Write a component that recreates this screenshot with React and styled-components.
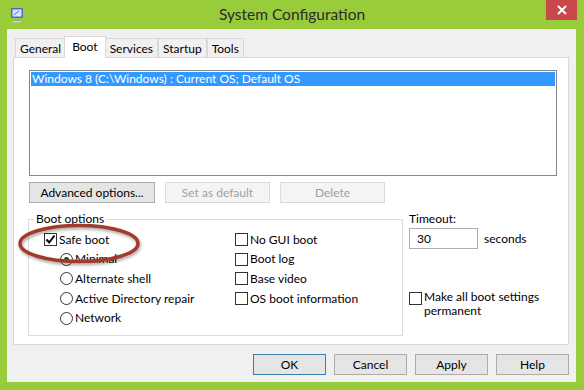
import React from "react";
import styled, { createGlobalStyle } from "styled-components";

const Global = createGlobalStyle`
  html, body { margin: 0; padding: 0; }
  body { font-family: "Lato", "Noto Sans", sans-serif; font-size: 12px; color: #000; }
`;

const Window = styled.div`
  position: relative;
  width: 584px;
  height: 390px;
  background: #99cc3a;
  display: flex;
  flex-direction: column;
  overflow: hidden;
`;

const TitleBar = styled.div`
  height: 29px;
  display: flex;
  align-items: center;
`;

const AppIcon = styled.svg`
  margin-left: 9px;
  width: 16px;
  height: 16px;
`;

const Title = styled.div`
  flex: 1;
  text-align: center;
  font-size: 15.5px;
  color: #2b2b2b;
  margin-top: -1px;
  padding-left: 13px;
`;

const CloseBtn = styled.div`
  width: 31px;
  height: 20px;
  background: #c7474a;
  align-self: flex-start;
  margin-right: 7px;
  display: flex;
  align-items: center;
  justify-content: center;
`;

const Client = styled.div`
  flex: 1;
  margin: 0 8px 8px 7px;
  background: #f0f0f0;
  padding: 6px 7px 0 6px;
  display: flex;
  flex-direction: column;
`;

const TabRow = styled.div`
  display: flex;
  align-items: flex-end;
  height: 22px;
  padding-left: 2px;
  position: relative;
  z-index: 1;
`;

const Tab = styled.div`
  height: ${p => (p.$active ? "22px" : "19px")};
  margin-bottom: ${p => (p.$active ? "-1px" : "0")};
  padding: 0 ${p => (p.$active ? "7px" : "4px")};
  margin-left: ${p => (p.$active ? "-2px" : "0")};
  margin-right: ${p => (p.$active ? "-1px" : "0")};
  background: ${p => (p.$active ? "#fff" : "#f0f0f0")};
  border: 1px solid #d9d9d9;
  border-bottom: ${p => (p.$active ? "1px solid #fff" : "none")};
  display: flex;
  align-items: ${p => (p.$active ? "flex-start" : "center")};
  padding-top: ${p => (p.$active ? "2px" : "0")};
  box-sizing: border-box;
  & + & { border-left: ${p => (p.$active ? "1px solid #d9d9d9" : "none")}; }
`;

const Panel = styled.div`
  height: 288px;
  box-sizing: border-box;
  background: #fff;
  border: 1px solid #d9d9d9;
  padding: 12px 11px 0 15px;
  display: flex;
  flex-direction: column;
`;

const ListBox = styled.div`
  height: 106px;
  border: 1px solid #828790;
  box-sizing: border-box;
  padding: 1px;
`;

const ListItem = styled.div`
  height: 14px;
  line-height: 14px;
  background: ${p => (p.$selected ? "#3399ff" : "transparent")};
  color: ${p => (p.$selected ? "#fff" : "#000")};
  padding-left: 1px;
`;

const ButtonRow = styled.div`
  display: flex;
  gap: ${p => p.$gap || 9}px;
  margin-top: ${p => p.$mt || 0}px;
`;

const Button = styled.div`
  width: ${p => p.$w}px;
  height: 21px;
  box-sizing: border-box;
  border: 1px solid ${p => (p.$default ? "#3c7fb1" : p.$disabled ? "#dadada" : "#acacac")};
  background: ${p => (p.$disabled ? "#f4f4f4" : "#e5e5e5")};
  color: ${p => (p.$disabled ? "#a0a0a0" : "#000")};
  display: flex;
  align-items: center;
  justify-content: center;
  padding-bottom: 1px;
`;

const Lower = styled.div`
  display: flex;
  margin-top: 9px;
`;

const GroupBox = styled.fieldset`
  margin: 0 0 0 -1px;
  width: 375px;
  height: 124px;
  box-sizing: border-box;
  border: 1px solid #dcdcdc;
  padding: 0;
  display: flex;
`;

const Legend = styled.legend`
  padding: 0 2px;
  margin-left: 5px;
  line-height: 14px;
`;

const Col = styled.div`
  display: flex;
  flex-direction: column;
  padding-left: ${p => p.$pl}px;
  padding-top: 4px;
  width: ${p => (p.$w ? p.$w + "px" : "auto")};
`;

const Row = styled.div`
  display: flex;
  align-items: center;
  height: 19.6px;
  padding-left: ${p => p.$indent || 0}px;
`;

const Box = styled.div`
  width: 13px;
  height: 13px;
  box-sizing: border-box;
  border: 1px solid #333;
  background: #fff;
  margin-right: 2px;
  margin-top: ${p => p.$mt || 0}px;
  display: flex;
  align-items: center;
  justify-content: center;
  flex-shrink: 0;
`;

const Radio = styled.div`
  width: 13px;
  height: 13px;
  box-sizing: border-box;
  border: 1px solid #333;
  border-radius: 50%;
  background: #fff;
  margin-right: 2px;
  display: flex;
  align-items: center;
  justify-content: center;
  flex-shrink: 0;
  &::after {
    content: "";
    display: ${p => (p.$on ? "block" : "none")};
    width: 5px;
    height: 5px;
    border-radius: 50%;
    background: #333;
  }
`;

const Side = styled.div`
  display: flex;
  flex-direction: column;
  margin-left: 6px;
`;

const Label = styled.div`
  line-height: 14px;
`;

const TimeoutRow = styled.div`
  display: flex;
  align-items: center;
  margin-top: 2px;
`;

const Input = styled.div`
  width: 69px;
  height: 21px;
  box-sizing: border-box;
  border: 1px solid #abadb3;
  background: #fff;
  padding-left: 7px;
  display: flex;
  align-items: center;
  margin-right: 6px;
`;

const PermRow = styled.div`
  display: flex;
  align-items: flex-start;
  margin-top: 41px;
`;

const PermText = styled.div`
  line-height: 14px;
  margin-top: 0;
`;

const Footer = styled.div`
  display: flex;
  justify-content: flex-end;
  padding-top: 9px;
  gap: 8px;
`;

const Annotation = styled.svg`
  position: absolute;
  left: 18px;
  top: 222px;
  width: 126px;
  height: 44px;
  overflow: visible;
  pointer-events: none;
`;

const Check = () => (
  <svg width="11" height="11" viewBox="0 0 11 11">
    <path d="M1.5 5.5 L4.2 8.5 L9.5 1.5" fill="none" stroke="#000" strokeWidth="2" />
  </svg>
);

export default function App() {
  return (
    <>
      <Global />
      <Window>
        <TitleBar>
          <AppIcon viewBox="0 0 16 16">
            <rect x="2" y="1" width="12" height="10" rx="1" fill="#4a6cc9" />
            <rect x="3.5" y="2.5" width="9" height="7" fill="#d9e6ff" />
            <path d="M5 8 L10 4" stroke="#4a6cc9" strokeWidth="1" />
            <rect x="5" y="12" width="6" height="2" fill="#9aa" />
            <rect x="4" y="14" width="8" height="1.5" fill="#ccc" />
          </AppIcon>
          <Title>System Configuration</Title>
          <CloseBtn>
            <svg width="10" height="10" viewBox="0 0 10 10">
              <path d="M1 1 L9 9 M9 1 L1 9" stroke="#fff" strokeWidth="2" />
            </svg>
          </CloseBtn>
        </TitleBar>
        <Client>
          <TabRow>
            <Tab>General</Tab>
            <Tab $active>Boot</Tab>
            <Tab>Services</Tab>
            <Tab>Startup</Tab>
            <Tab>Tools</Tab>
          </TabRow>
          <Panel>
            <ListBox>
              <ListItem $selected>Windows 8 (C:\Windows) : Current OS; Default OS</ListItem>
            </ListBox>
            <ButtonRow $mt={6} $gap={10}>
              <Button $w={126}>Advanced options...</Button>
              <Button $w={105} $disabled>Set as default</Button>
              <Button $w={105} $disabled>Delete</Button>
            </ButtonRow>
            <Lower>
              <GroupBox>
                <Legend>Boot options</Legend>
                <Col $pl={15} $w={191}>
                  <Row>
                    <Box><Check /></Box>
                    <Label>Safe boot</Label>
                  </Row>
                  <Row $indent={16}><Radio $on /><Label>Minimal</Label></Row>
                  <Row $indent={16}><Radio /><Label>Alternate shell</Label></Row>
                  <Row $indent={16}><Radio /><Label>Active Directory repair</Label></Row>
                  <Row $indent={16}><Radio /><Label>Network</Label></Row>
                </Col>
                <Col $pl={0}>
                  <Row><Box /><Label>No GUI boot</Label></Row>
                  <Row><Box /><Label>Boot log</Label></Row>
                  <Row><Box /><Label>Base video</Label></Row>
                  <Row><Box /><Label>OS boot information</Label></Row>
                </Col>
              </GroupBox>
              <Side>
                <Label>Timeout:</Label>
                <TimeoutRow>
                  <Input>30</Input>
                  <Label>seconds</Label>
                </TimeoutRow>
                <PermRow>
                  <Box $mt={2} />
                  <PermText>Make all boot settings<br />permanent</PermText>
                </PermRow>
              </Side>
            </Lower>
          </Panel>
          <Footer>
            <Button $w={73} $default>OK</Button>
            <Button $w={73}>Cancel</Button>
            <Button $w={73}>Apply</Button>
            <Button $w={73}>Help</Button>
          </Footer>
        </Client>
        <Annotation viewBox="0 0 126 44">
          <defs>
            <filter id="sh" x="-20%" y="-30%" width="140%" height="170%">
              <feDropShadow dx="1" dy="2" stdDeviation="1.5" floodColor="#000" floodOpacity="0.35" />
            </filter>
          </defs>
          <ellipse cx="61" cy="21.5" rx="59" ry="18" fill="none" stroke="#a33b2c" strokeWidth="3.5" filter="url(#sh)" />
        </Annotation>
      </Window>
    </>
  );
}
